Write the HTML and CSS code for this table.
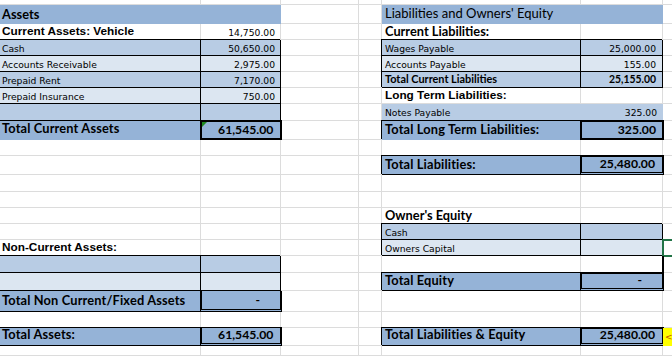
FILE: index.html
```html
<!DOCTYPE html>
<html>
<head>
<meta charset="utf-8">
<link rel="stylesheet" href="styles.css">
</head>
<body>
<div class="sheet">
  <div class="row h5"></div>

  <div class="row h19">
    <div class="cell cab fh lato b hd pb36">Assets</div>
    <div class="cell cef fh lato title pb36 pl3">Liabilities and Owners' Equity</div>
  </div>

  <div class="row h16">
    <div class="cell ca arl pb22">Current Assets: Vehicle</div>
    <div class="cell cb sm num pr6 pb29">14,750.00</div>
    <div class="cell ce lato b hd pb26 pl3">Current Liabilities:</div>
  </div>

  <div class="row h16">
    <div class="cell ca fm bx sm pb19">Cash</div>
    <div class="cell cb fm bx sm num pb19">50,650.00</div>
    <div class="cell ce fm bx sm pb19 pl3">Wages Payable</div>
    <div class="cell cf fm bx sm num pr6 pb19">25,000.00</div>
  </div>

  <div class="row h16">
    <div class="cell ca fl bx sm pb19">Accounts Receivable</div>
    <div class="cell cb fl bx sm num pb19">2,975.00</div>
    <div class="cell ce fl bx sm pb19 pl3">Accounts Payable</div>
    <div class="cell cf fl bx sm num pr6 pb19">155.00</div>
  </div>

  <div class="row h16">
    <div class="cell ca fm bx sm pb19">Prepaid Rent</div>
    <div class="cell cb fm bx sm num pb19">7,170.00</div>
    <div class="cell ce fm bx lato b mid pb25 pl3">Total Current Liabilities</div>
    <div class="cell cf fm bx lato b midn num pr6 pb25">25,155.00</div>
  </div>

  <div class="row h16">
    <div class="cell ca fl bx sm pb19">Prepaid Insurance</div>
    <div class="cell cb fl bx sm num pb19">750.00</div>
    <div class="cell ce arl pb22 pl3">Long Term Liabilities:</div>
  </div>

  <div class="row h17">
    <div class="cell ca fm bx"></div>
    <div class="cell cb fm bx"></div>
    <div class="cell ce fm sm pb43 pl3">Notes Payable</div>
    <div class="cell cf fm sm num pr6 pb43">325.00</div>
  </div>

  <div class="row h19">
    <div class="cell ca fh lato b tl pb5">Total Current Assets</div>
    <div class="cell cb fh tb lato b big num pr67 pb23 flag">61,545.00</div>
    <div class="cell ce fh sh lato b tl pb46 pl3">Total Long Term Liabilities:</div>
    <div class="cell cf fh tb lato b big num pr6 pb16">325.00</div>
  </div>

  <div class="row h16"></div>

  <div class="row h19">
    <div class="cell ce fh sh bb lato b tl pb33 pl3">Total Liabilities:</div>
    <div class="cell cf fh tb dbl lato b big num pr7 pb23">25,480.00</div>
  </div>

  <div class="row h17"></div>
  <div class="row h16"></div>

  <div class="row h16">
    <div class="cell ce lato b hd pb26 pl3">Owner's Equity</div>
  </div>

  <div class="row h16">
    <div class="cell ce fm bx sm pb19 pl3">Cash</div>
    <div class="cell cf fm bx"></div>
  </div>

  <div class="row h16">
    <div class="cell ca arl pb27">Non-Current Assets:</div>
    <div class="cell ce fl bx sm pb19 pl3">Owners Capital</div>
    <div class="cell cf fl bx"></div>
    <div class="cell cg sel"></div>
  </div>

  <div class="row h17">
    <div class="cell ca fm bx"></div>
    <div class="cell cb fm bx"></div>
    <div class="cell cf rthick"></div>
  </div>

  <div class="row h18">
    <div class="cell ca fl bx"></div>
    <div class="cell cb fl bx"></div>
    <div class="cell ce fh sh bb lato b tl pb29 pl3">Total Equity</div>
    <div class="cell cf fh tb dbl lato b big num pr20 pb16">-</div>
  </div>

  <div class="row h21">
    <div class="cell ca fh bb lato b tl pb46">Total Non Current/Fixed Assets</div>
    <div class="cell cb fh sides dbl lato b big num pr20 pb26">-</div>
  </div>

  <div class="row h16"></div>

  <div class="row h18">
    <div class="cell ca fh sh bb lato b tl pb4">Total Assets:</div>
    <div class="cell cb fh sides dbl shtop lato b big num pr67 pb16">61,545.00</div>
    <div class="cell ce fh sh bb lato b tl pb4 pl3">Total Liabilities &amp; Equity</div>
    <div class="cell cf fh tb dbl lato b big num pr7 pb16">25,480.00</div>
    <div class="cell cg fy note">&lt;=</div>
  </div>

  <div class="row h10"></div>
</div>
</body>
</html>
```

FILE: styles.css
```css
html, body {
  margin: 0;
  padding: 0;
  background: #fff;
}

.sheet {
  width: 672px;
  height: 356px;
  overflow: hidden;
  background-color: #fff;
  background-image:
    linear-gradient(#dcdcdc, #dcdcdc),
    linear-gradient(#dcdcdc, #dcdcdc),
    linear-gradient(#dcdcdc, #dcdcdc),
    linear-gradient(#dcdcdc, #dcdcdc),
    linear-gradient(#dcdcdc, #dcdcdc),
    linear-gradient(#dcdcdc, #dcdcdc);
  background-size: 1px 100%;
  background-repeat: no-repeat;
  background-position: 200px 0, 280px 0, 358px 0, 381px 0, 580px 0, 662px 0;
  color: #000;
}

.row {
  display: grid;
  grid-template-columns: 201px 80px 78px 23px 199px 82px 9px;
  grid-template-rows: 100%;
  background: linear-gradient(#dcdcdc, #dcdcdc) left bottom / 100% 1px no-repeat;
}

.h5 { height: 5px; }
.h10 { height: 10px; }
.h16 { height: 16px; }
.h17 { height: 17px; }
.h18 { height: 18px; }
.h19 { height: 19px; }
.h21 { height: 21px; }

.cell {
  box-sizing: border-box;
  display: flex;
  align-items: flex-end;
  padding-left: 2px;
  white-space: nowrap;
  line-height: 1;
  min-width: 0;
}

.ca { grid-column: 1; }
.cb { grid-column: 2; }
.cab { grid-column: 1 / 3; }
.ce { grid-column: 5; }
.cf { grid-column: 6; }
.cef { grid-column: 5 / 7; }
.cg { grid-column: 7; }

/* fills */
.fh { background-color: #95b3d7; }
.fm { background-color: #b8cce4; }
.fl { background-color: #dce6f1; }
.fy { background-color: #ffff00; }

/* fonts */
.lato { font-family: Lato, "Open Sans", sans-serif; }
.b { font-weight: bold; }
.big { font-size: 12.2px; }
.hd { font-size: 12.8px; }
.tl { font-size: 12.8px; letter-spacing: 0.15px; }
.title { font-size: 13px; }
.mid { font-size: 10.9px; }
.midn { font-size: 10.4px; }
.arl {
  font-family: "Liberation Sans", Arial, sans-serif;
  font-weight: bold;
  font-size: 11.8px;
}
.sm {
  font-family: "DejaVu Sans", Verdana, sans-serif;
  font-size: 9.2px;
}

.num {
  justify-content: flex-end;
  padding-right: 5px;
}
.pr6 { padding-right: 6px; }
.pr67 { padding-right: 6.7px; }
.pr7 { padding-right: 7px; }
.pr20 { padding-right: 20px; }
.pl3 { padding-left: 3px; }

.pb16 { padding-bottom: 1.6px; }
.pb19 { padding-bottom: 1.9px; }
.pb22 { padding-bottom: 2.2px; }
.pb23 { padding-bottom: 2.3px; }
.pb25 { padding-bottom: 2.5px; }
.pb26 { padding-bottom: 2.6px; }
.pb27 { padding-bottom: 2.7px; }
.pb29 { padding-bottom: 2.9px; }
.pb33 { padding-bottom: 3.3px; }
.pb36 { padding-bottom: 3.6px; }
.pb4 { padding-bottom: 4px; }
.pb43 { padding-bottom: 4.3px; }
.pb46 { padding-bottom: 4.6px; }
.pb5 { padding-bottom: 5px; }

/* borders */
.bx {
  border-right: 1px solid #000;
  border-bottom: 1px solid #000;
  box-shadow: -1px -1px 0 #000;
}
.sh { box-shadow: -1px -1px 0 #000; }
.shtop { box-shadow: 0 -1px 0 #000; }
.bb { border-bottom: 1px solid #000; }

.tb {
  border: 2px solid #000;
  margin: -1px -1px 0 -1px;
}
.sides {
  border-left: 2px solid #000;
  border-right: 2px solid #000;
  margin: 0 -1px;
}
.dbl { border-bottom: 3px double #000; }

.rthick {
  border-right: 2px solid #000;
  margin-right: -1px;
}

.sel {
  border: 2px solid #217346;
  border-right: 0;
  margin: -1px 0 -1px -1px;
}

.flag { position: relative; }
.flag::before {
  content: "";
  position: absolute;
  left: 0;
  top: 0;
  width: 0;
  height: 0;
  border-style: solid;
  border-width: 5px 5px 0 0;
  border-color: #1f8a1f transparent transparent transparent;
}

.note {
  overflow: hidden;
  font-family: "DejaVu Sans", Verdana, sans-serif;
  font-size: 9px;
  color: #c04a00;
  padding-left: 2px;
  padding-bottom: 4px;
}
```
